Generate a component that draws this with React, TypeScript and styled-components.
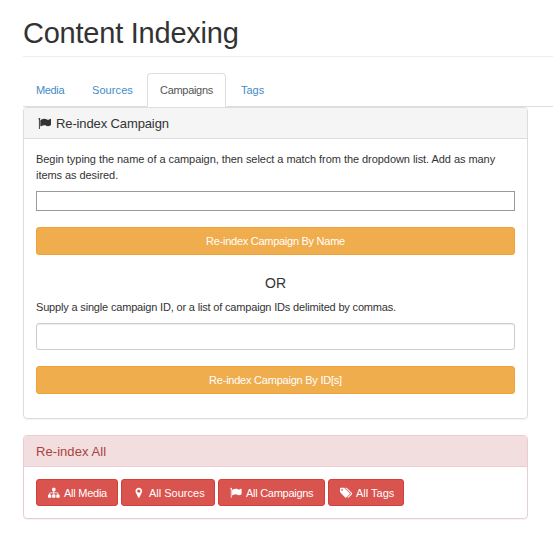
import React from 'react';
import styled, { createGlobalStyle } from 'styled-components';

const GlobalStyle = createGlobalStyle`
  *, *::before, *::after { box-sizing: border-box; }
  body {
    margin: 0;
    background: #fff;
    color: #333;
    font: 11px/15px "Liberation Sans", Arial, sans-serif;
    overflow: hidden;
  }
  input, button { font: inherit; letter-spacing: inherit; }
`;

const Page = styled.main`
  padding: 16px 0 0 23px;
`;

const PageHeader = styled.header`
  height: 41px;
  border-bottom: 1px solid #eee;
`;

const Title = styled.h1`
  margin: 0;
  font-size: 29px;
  font-weight: 400;
  line-height: 34px;
  letter-spacing: -0.23px;
`;

const Tabs = styled.nav`
  display: flex;
  gap: 2px;
  height: 34px;
  margin-top: 16px;
  border-bottom: 1px solid #ddd;
`;

const Tab = styled.a<{ $active?: boolean; $width: number }>`
  width: ${(p) => p.$width}px;
  height: 34px;
  padding: 9px 0 0 12px;
  border: 1px solid ${(p) => (p.$active ? '#ddd' : 'transparent')};
  border-bottom-color: ${(p) => (p.$active ? '#fff' : 'transparent')};
  border-radius: 4px 4px 0 0;
  background: ${(p) => (p.$active ? '#fff' : 'transparent')};
  color: ${(p) => (p.$active ? '#555' : '#428bca')};
  text-decoration: none;
  white-space: nowrap;
`;

const Panel = styled.section<{ $danger?: boolean }>`
  width: 505px;
  margin-bottom: 16px;
  border: 1px solid ${(p) => (p.$danger ? '#ebccd1' : '#ddd')};
  border-radius: 4px;
  box-shadow: 0 1px 1px rgba(0, 0, 0, 0.05);
`;

const PanelHeading = styled.h3<{ $danger?: boolean }>`
  display: flex;
  align-items: center;
  gap: 3px;
  height: 31px;
  margin: 0;
  padding: 0 12px;
  border-bottom: 1px solid ${(p) => (p.$danger ? '#ebccd1' : '#ddd')};
  border-radius: 3px 3px 0 0;
  background: ${(p) => (p.$danger ? '#f2dede' : '#f5f5f5')};
  color: ${(p) => (p.$danger ? '#a94442' : '#333')};
  font-size: 13px;
  font-weight: 400;
`;

const FormBody = styled.div`
  display: flex;
  flex-direction: column;
  height: 279px;
  padding: 13px 12px 0;
`;

const HelpText = styled.p`
  margin: 0;
  line-height: 15.5px;
  white-space: nowrap;
`;

const NameInput = styled.input`
  height: 20px;
  margin: 8px 0 16px;
  border: 1px solid #999;
  outline: 0;
`;

const IdInput = styled.input`
  height: 27px;
  margin: 7.5px 0 16px;
  border: 1px solid #ccc;
  border-radius: 3px;
  box-shadow: inset 0 1px 1px rgba(0, 0, 0, 0.075);
  outline: 0;
`;

const SubmitButton = styled.button`
  height: 28px;
  flex: none;
  padding: 0;
  border: 1px solid #eea236;
  border-radius: 3px;
  background: #f0ad4e;
  color: #fff;
`;

const Divider = styled.h4`
  margin: 21px 0 9px;
  font-size: 14px;
  font-weight: 400;
  line-height: 15px;
  text-align: center;
`;

const ButtonRow = styled.div`
  display: flex;
  gap: 3px;
  padding: 12px;
`;

const DangerButton = styled.button<{ $width: number }>`
  display: flex;
  align-items: center;
  width: ${(p) => p.$width}px;
  height: 27px;
  padding: 1px 0 0 11px;
  border: 1px solid #d43f3a;
  border-radius: 3px;
  background: #d9534f;
  color: #fff;
  white-space: nowrap;
`;

const Label = styled.span<{ $tracking?: number }>`
  letter-spacing: ${(p) => p.$tracking ?? 0}px;
`;

const Glyph = styled.svg`
  flex: none;
  fill: currentColor;
`;

const HeadingIcon = styled.span`
  display: flex;
  justify-content: flex-end;
  width: 15px;
  margin-right: 2px;
`;

const ButtonIcon = styled.span`
  display: flex;
  width: 16px;
`;

const icons = {
  flag: {
    width: 1792,
    d: 'M320 256q0 72-64 110v1266q0 13-9.500 22.500t-22.500 9.500h-64q-13 0-22.500-9.500t-9.500-22.500v-1266q-64-38-64-110 0-53 37.500-90.500t90.500-37.500 90.500 37.500 37.500 90.500zm1472 64v763q0 25-12.500 38.500t-39.500 27.500q-215 116-369 116-61 0-123.500-22t-108.500-48-115.500-48-142.500-22q-192 0-464 146-17 9-33 9-26 0-45-19t-19-45v-742q0-32 31-55 21-14 79-43 236-120 421-120 107 0 200 29t219 88q38 19 88 19 54 0 117.500-21t110-47 88-47 54.500-21q26 0 45 19t19 45z',
  },
  marker: {
    width: 1792,
    d: 'M1152 640q0-106-75-181t-181-75-181 75-75 181 75 181 181 75 181-75 75-181zm256 0q0 109-33 179l-364 774q-16 33-47.500 52t-67.500 19-67.500-19-46.500-52l-365-774q-33-70-33-179 0-212 150-362t362-150 362 150 150 362z',
  },
  sitemap: {
    width: 1792,
    d: 'M1792 1248v320q0 40-28 68t-68 28h-320q-40 0-68-28t-28-68v-320q0-40 28-68t68-28h96v-192h-512v192h96q40 0 68 28t28 68v320q0 40-28 68t-68 28h-320q-40 0-68-28t-28-68v-320q0-40 28-68t68-28h96v-192h-512v192h96q40 0 68 28t28 68v320q0 40-28 68t-68 28h-320q-40 0-68-28t-28-68v-320q0-40 28-68t68-28h96v-192q0-52 38-90t90-38h512v-192h-96q-40 0-68-28t-28-68v-320q0-40 28-68t68-28h320q40 0 68 28t28 68v320q0 40-28 68t-68 28h-96v192h512q52 0 90 38t38 90v192h96q40 0 68 28t28 68z',
  },
  tags: {
    width: 1900,
    d: 'M448 448q0-53-37.500-90.500t-90.500-37.500-90.500 37.500-37.500 90.500 37.500 90.500 90.500 37.500 90.500-37.500 37.500-90.500zm1067 576q0 53-37 90l-491 492q-39 37-91 37-53 0-90-37l-715-716q-38-37-64.500-101t-26.500-117v-416q0-52 38-90t90-38h416q53 0 117 26.500t102 64.500l715 714q37 39 37 91zm384 0q0 53-37 90l-491 492q-39 37-91 37-36 0-59-14t-53-45l470-470q37-37 37-90 0-52-37-91l-715-714q-38-38-102-64.500t-117-26.500h224q53 0 117 26.500t102 64.500l715 714q37 39 37 91z',
  },
};

type IconName = keyof typeof icons;

function Icon({ name, size }: { name: IconName; size: number }) {
  const { width, d } = icons[name];
  return (
    <Glyph width={(size * width) / 1792} height={size} viewBox={`0 0 ${width} 1792`} aria-hidden="true">
      <path d={d} />
    </Glyph>
  );
}

const tabs = [
  { label: 'Media', width: 54, tracking: -0.35 },
  { label: 'Sources', width: 66, tracking: 0.08 },
  { label: 'Campaigns', width: 79, active: true, tracking: -0.3 },
  { label: 'Tags', width: 50, tracking: 0 },
];

const actions: { icon: IconName; label: string; width: number; tracking: number }[] = [
  { icon: 'sitemap', label: 'All Media', width: 82, tracking: -0.25 },
  { icon: 'marker', label: 'All Sources', width: 94, tracking: 0 },
  { icon: 'flag', label: 'All Campaigns', width: 107, tracking: -0.28 },
  { icon: 'tags', label: 'All Tags', width: 76, tracking: 0 },
];

export default function App() {
  return (
    <>
      <GlobalStyle />
      <Page>
        <PageHeader>
          <Title>Content Indexing</Title>
        </PageHeader>
        <Tabs>
          {tabs.map((t) => (
            <Tab key={t.label} $active={t.active} $width={t.width}>
              <Label $tracking={t.tracking}>{t.label}</Label>
            </Tab>
          ))}
        </Tabs>
        <Panel>
          <PanelHeading>
            <HeadingIcon>
              <Icon name="flag" size={13} />
            </HeadingIcon>
            <Label $tracking={-0.12}>Re-index Campaign</Label>
          </PanelHeading>
          <FormBody>
            <HelpText>
              <Label $tracking={-0.054}>
                Begin typing the name of a campaign, then select a match from the dropdown list. Add as many
              </Label>
              <br />
              <Label $tracking={-0.06}>items as desired.</Label>
            </HelpText>
            <NameInput aria-label="Campaign name" />
            <SubmitButton>
              <Label $tracking={-0.27}>Re-index Campaign By Name</Label>
            </SubmitButton>
            <Divider>OR</Divider>
            <HelpText>
              <Label $tracking={-0.173}>
                Supply a single campaign ID, or a list of campaign IDs delimited by commas.
              </Label>
            </HelpText>
            <IdInput aria-label="Campaign IDs" />
            <SubmitButton>
              <Label $tracking={-0.23}>Re-index Campaign By ID[s]</Label>
            </SubmitButton>
          </FormBody>
        </Panel>
        <Panel $danger>
          <PanelHeading $danger>
            <Label $tracking={0.06}>Re-index All</Label>
          </PanelHeading>
          <ButtonRow>
            {actions.map((a) => (
              <DangerButton key={a.label} $width={a.width}>
                <ButtonIcon>
                  <Icon name={a.icon} size={11.6} />
                </ButtonIcon>
                <Label $tracking={a.tracking}>{a.label}</Label>
              </DangerButton>
            ))}
          </ButtonRow>
        </Panel>
      </Page>
    </>
  );
}
